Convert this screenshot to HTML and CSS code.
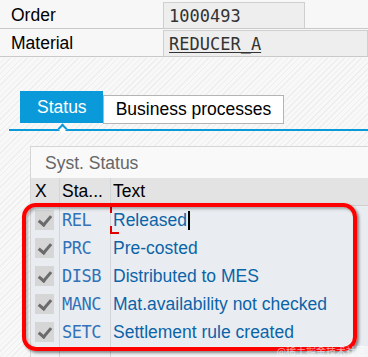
FILE: index.html
```html
<!DOCTYPE html>
<html lang="en">

<head>
    <meta charset="UTF-8">
    <title>Order Status</title>
    <link rel="stylesheet" href="styles.css">
</head>

<body>
    <!-- Order header fields -->
    <div class="fields">
        <div class="field-row">
            <span class="label">Order</span>
            <span class="value short">1000493</span>
        </div>
        <div class="field-row">
            <span class="label">Material</span>
            <span class="value link">REDUCER_A</span>
        </div>
    </div>

    <div class="body-area">
        <!-- Tabs -->
        <div class="tabstrip">
            <span class="tab active">Status</span>
            <span class="tab">Business processes</span>
        </div>
        <div class="tabline"><span class="caret"></span></div>

        <!-- Status panel -->
        <div class="panel">
            <div class="panel-title">Syst. Status</div>
            <div class="table">
                <div class="row head">
                    <span class="cell c-x">X</span>
                    <span class="cell c-st">Sta...</span>
                    <span class="cell c-txt">Text</span>
                </div>
                <div class="rows">
                    <div class="row">
                        <span class="cell c-x"><span class="check"></span></span>
                        <span class="cell c-st code">REL</span>
                        <span class="cell c-txt focus">Released<span class="cursor"></span></span>
                    </div>
                    <div class="row">
                        <span class="cell c-x"><span class="check"></span></span>
                        <span class="cell c-st code">PRC</span>
                        <span class="cell c-txt">Pre-costed</span>
                    </div>
                    <div class="row">
                        <span class="cell c-x"><span class="check"></span></span>
                        <span class="cell c-st code">DISB</span>
                        <span class="cell c-txt">Distributed to MES</span>
                    </div>
                    <div class="row">
                        <span class="cell c-x"><span class="check"></span></span>
                        <span class="cell c-st code">MANC</span>
                        <span class="cell c-txt">Mat.availability not checked</span>
                    </div>
                    <div class="row">
                        <span class="cell c-x"><span class="check"></span></span>
                        <span class="cell c-st code">SETC</span>
                        <span class="cell c-txt">Settlement rule created</span>
                    </div>
                    <!-- Highlight frame drawn over the rows -->
                    <div class="highlight"></div>
                </div>
                <div class="row empty">
                    <span class="cell c-x"></span>
                    <span class="cell c-st"></span>
                    <span class="cell c-txt"></span>
                </div>
            </div>
        </div>
        <span class="watermark">@稀土掘金技术社区</span>
    </div>
</body>

</html>
```

FILE: styles.css
```css
/* Reset some basic styles */
* {
    margin: 0;
    padding: 0;
    box-sizing: border-box;
}

body {
    font-family: Tahoma, 'Liberation Sans', Arial, sans-serif;
    font-size: 17.5px;
    background-color: #f7f7f7;
    width: 368px;
    height: 357px;
    overflow: hidden;
}

/* Header fields */
.fields {
    padding-top: 2px;
}

.field-row {
    display: flex;
    height: 27px;
    border-bottom: 1px solid #c9c9c9;
    margin-bottom: 1px;
}

.label {
    width: 163px;
    padding-left: 11px;
    line-height: 26px;
    color: #000;
}

.value {
    flex: 1;
    background-color: #eeeeee;
    border: 1px solid #cfcfcf;
    border-bottom: none;
    font-family: 'DejaVu Sans Mono', monospace;
    font-size: 17px;
    color: #333;
    line-height: 26px;
    padding-left: 5px;
}

.value.short {
    flex: 0 0 142px;
}

.value.link {
    text-decoration: underline;
    text-underline-offset: 2px;
}

/* Hatched area below the header */
.body-area {
    position: relative;
    height: 300px;
    background-color: #f7f7f7;
    background-image: repeating-linear-gradient(135deg, #f8f8f8 0 3px, #eeeeee 3px 4px);
    padding-top: 34px;
}

.tabstrip {
    display: flex;
    align-items: flex-end;
    padding-left: 20px;
    height: 32px;
}

.tab {
    height: 29px;
    padding: 0 12px 0 12px;
    line-height: 27px;
    background-color: #fff;
    border: 1px solid #b4b4b4;
    color: #000;
}

.tab.active {
    height: 32px;
    line-height: 30px;
    background-color: #0a9ad9;
    border-color: #0a9ad9;
    color: #fff;
    padding: 0 15px 0 16px;
    margin-bottom: 1px;
}

.tabline {
    position: relative;
    margin: 5px 0 0 9px;
    height: 2px;
    background-color: #0a9ad9;
}

.caret {
    position: absolute;
    left: 50px;
    top: -4px;
    width: 7px;
    height: 7px;
    background-color: #fff;
    border-top: 2px solid #0a9ad9;
    border-left: 2px solid #0a9ad9;
    transform: rotate(45deg);
}

/* Status panel */
.panel {
    margin: 15px 0 0 30px;
    background-color: #f9f9f9;
    border-top: 1px solid #d6d6d6;
    border-left: 1px solid #d6d6d6;
}

.panel-title {
    height: 31px;
    line-height: 32px;
    padding-left: 14px;
    color: #666;
}

.table {
    display: flex;
    flex-direction: column;
}

.rows {
    position: relative;
}

.row {
    display: flex;
    height: 28px;
    background-color: #e9edf1;
}

.row.head {
    height: 28px;
    background-color: #e3e3e3;
    border-bottom: 1px solid #d0d0d0;
}

.row.empty {
    background-color: #f2f4f6;
}

.cell {
    display: flex;
    align-items: center;
    border-right: 1px solid #d3d6d9;
    color: #0b64a8;
    white-space: nowrap;
}

.head .cell {
    color: #000;
}

.c-x {
    width: 29px;
    padding-left: 4px;
}

.c-st {
    width: 51px;
    padding-left: 2px;
}

.c-txt {
    flex: 1;
    padding-left: 2px;
    border-right: none;
}

.code {
    font-family: 'DejaVu Sans Mono', monospace;
    font-size: 17px;
    color: #3272b8;
    letter-spacing: -0.5px;
}

.check {
    display: block;
    width: 19px;
    height: 20px;
    background-color: #d6d6d6;
    position: relative;
}

.check::after {
    content: "";
    position: absolute;
    left: 6px;
    top: 3px;
    width: 5px;
    height: 10px;
    border-right: 3px solid #6b6b6b;
    border-bottom: 3px solid #6b6b6b;
    transform: rotate(40deg);
}

/* Focused cell corner marks */
.focus {
    position: relative;
}

.focus::before,
.focus::after {
    content: "";
    position: absolute;
    left: -1px;
    width: 7px;
    height: 6px;
    border-left: 2px solid #e00000;
}

.focus::before {
    top: -1px;
    border-top: 2px solid #e00000;
}

.focus::after {
    bottom: 0;
    border-bottom: 2px solid #e00000;
}

.cursor {
    display: inline-block;
    width: 2px;
    height: 19px;
    background-color: #000;
    margin-left: 1px;
}

/* Red annotation frame */
.highlight {
    position: absolute;
    left: -9px;
    top: -3px;
    width: 335px;
    height: 148px;
    border: 4px solid #ff0000;
    border-radius: 14px;
    box-shadow: 2px 2px 3px rgba(0, 0, 0, 0.45), inset 2px 2px 3px rgba(0, 0, 0, 0.3);
}

.watermark {
    position: absolute;
    right: 2px;
    bottom: 0;
    font-family: 'Noto Sans CJK SC', sans-serif;
    font-size: 10px;
    color: rgba(255, 255, 255, 0.6);
}
```
